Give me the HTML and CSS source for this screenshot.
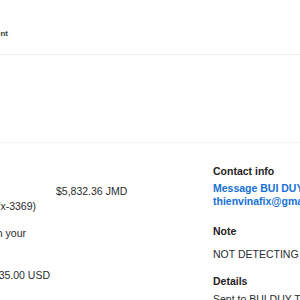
FILE: index.html
```html
<!DOCTYPE html>
<html>
<head>
<meta charset="utf-8">
<link rel="stylesheet" href="styles.css">
</head>
<body>
<div class="page">
  <header class="top">
    <div class="crumb"><span>Payment</span></div>
  </header>
  <section class="mid"></section>
  <main class="main">
    <div class="left">
      <div class="row row-amount"><span>$5,832.36 JMD</span></div>
      <div class="row row-card"><span>Visa Credit Card (x-3369)</span></div>
      <div class="row row-note"><span>This will appear on your</span></div>
      <div class="row row-total"><span>$35.00 USD</span></div>
    </div>
    <aside class="right">
      <h3 class="heading">Contact info</h3>
      <a class="link link-first">Message BUI DUY THIEN</a>
      <a class="link">thienvinafix@gmail.com</a>
      <h3 class="heading heading-note">Note</h3>
      <p class="text">NOT DETECTING NUMBER</p>
      <h3 class="heading heading-details">Details</h3>
      <p class="text text-sent">Sent to BUI DUY THIEN</p>
    </aside>
  </main>
</div>
</body>
</html>
```

FILE: styles.css
```css
html, body {
  margin: 0;
  padding: 0;
  background: #ffffff;
  overflow: hidden;
}
body {
  font-family: "Liberation Sans", Arial, sans-serif;
  color: #2a2c2e;
  width: 300px;
  height: 300px;
}
.page {
  display: flex;
  flex-direction: column;
}
.top {
  height: 55px;
  border-bottom: 1px solid #eceeef;
  box-sizing: border-box;
  padding-top: 29px;
}
.crumb {
  display: flex;
  justify-content: flex-end;
  width: 8px;
  font-size: 8px;
  font-weight: 700;
  color: #3a3c3e;
  line-height: 10px;
  white-space: nowrap;
}
.mid {
  height: 88px;
  border-bottom: 1px solid #f1f2f3;
  box-sizing: border-box;
}
.main {
  display: grid;
  grid-template-columns: 213px 1fr;
  font-size: 10.5px;
}
.left {
  overflow: hidden;
  padding-top: 40px;
  display: flex;
  flex-direction: column;
}
.row {
  line-height: 14px;
  white-space: nowrap;
  display: flex;
}
.row-amount {
  padding-left: 56px;
  margin-top: 1px;
}
.row-card {
  width: 36px;
  justify-content: flex-end;
  margin-top: 1px;
}
.row-note {
  width: 26px;
  justify-content: flex-end;
  margin-top: 13px;
}
.row-total {
  width: 50px;
  justify-content: flex-end;
  margin-top: 28px;
}
.right {
  padding-top: 21px;
  white-space: nowrap;
  display: flex;
  flex-direction: column;
}
.heading {
  margin: 0;
  font-size: 10.5px;
  font-weight: 700;
  line-height: 14px;
  color: #1f2123;
}
.link {
  font-size: 10.5px;
  font-weight: 700;
  color: #1470d6;
  line-height: 13px;
}
.link-first {
  margin-top: 4px;
}
.heading-note {
  margin-top: 16px;
}
.text {
  margin: 9px 0 0;
  line-height: 14px;
}
.heading-details {
  margin-top: 13px;
}
.text-sent {
  margin-top: 4px;
}
```
